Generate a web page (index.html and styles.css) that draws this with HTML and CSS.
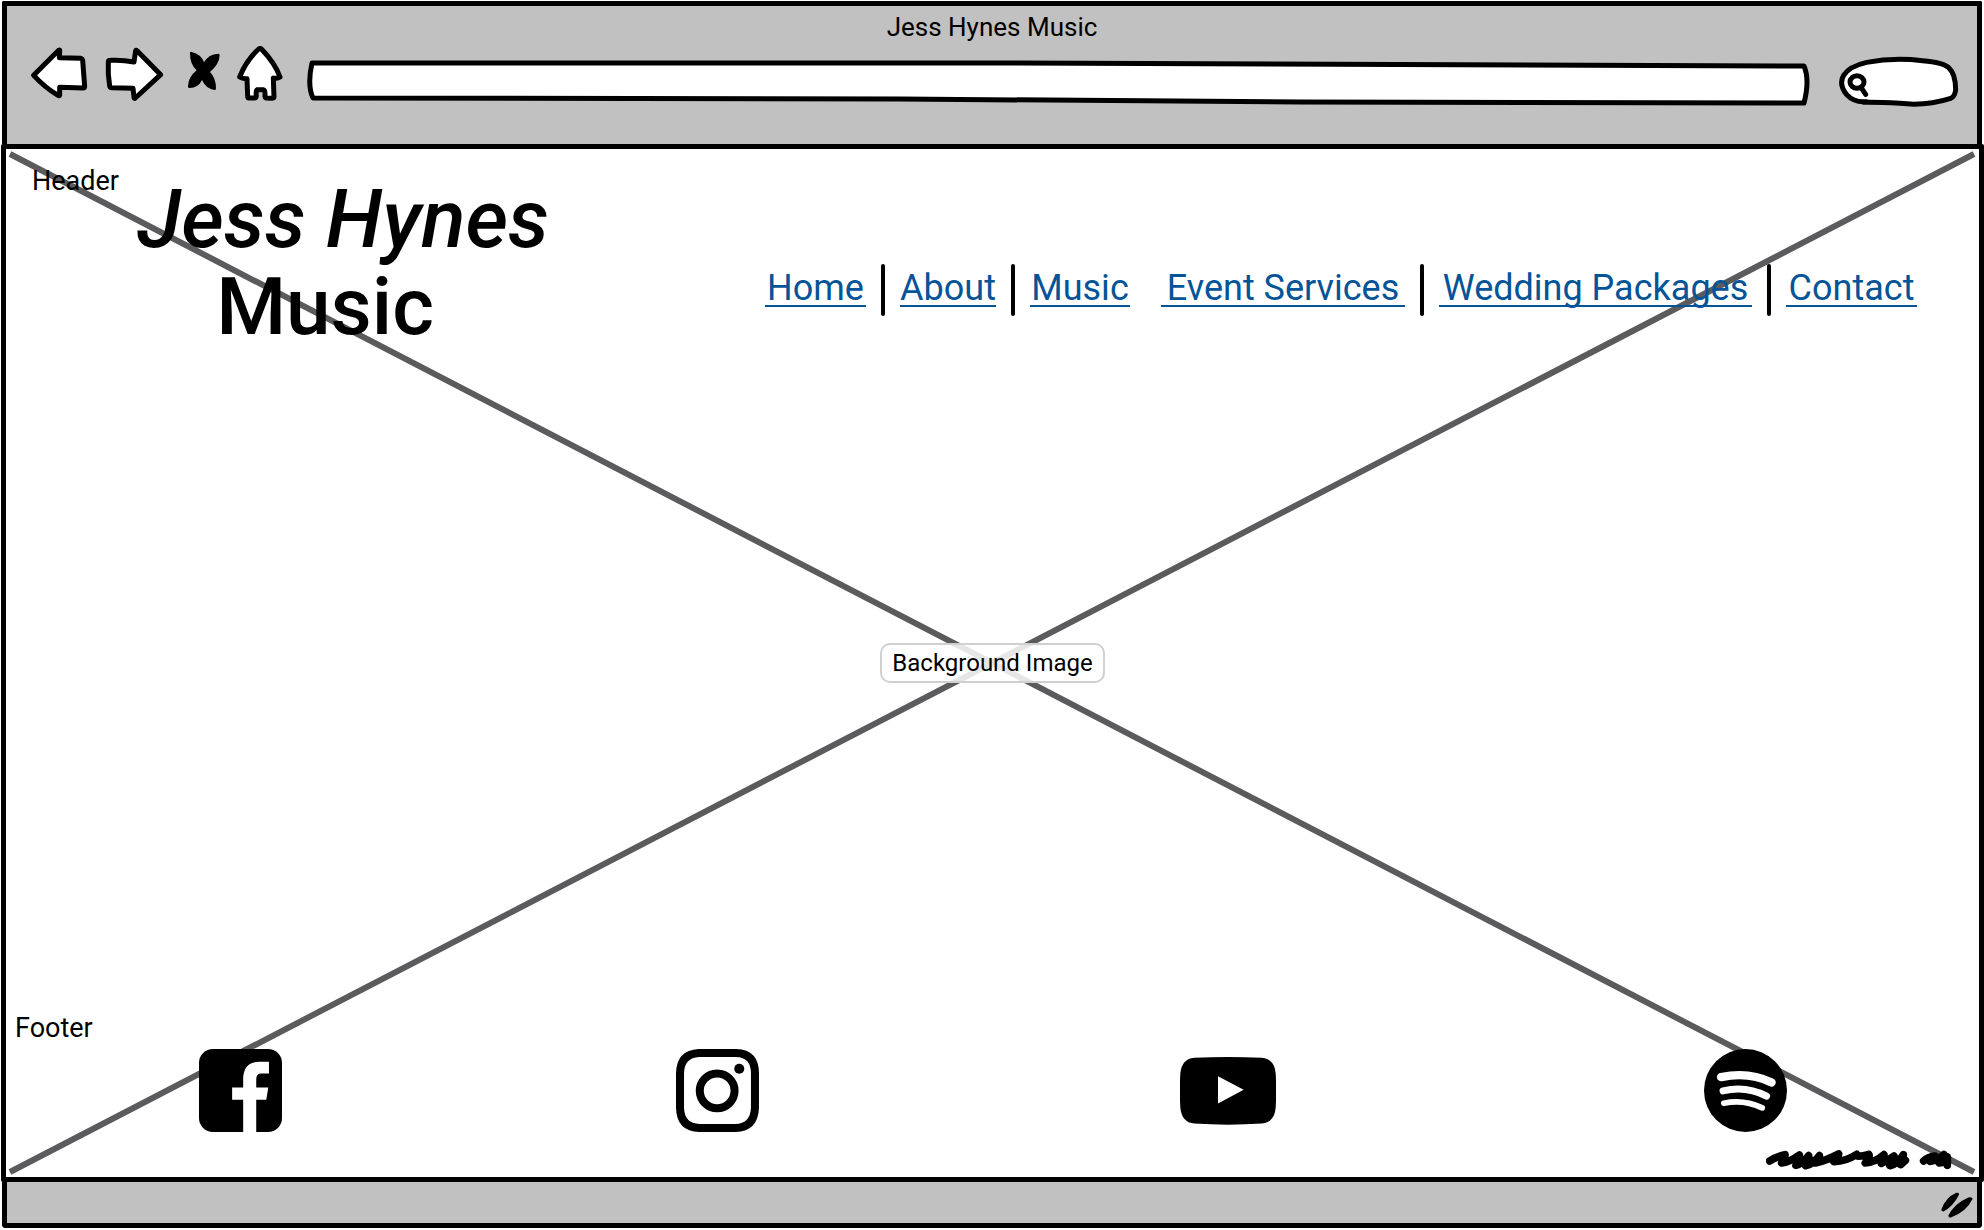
FILE: index.html
```html
<!DOCTYPE html>
<html lang="en">
<head>
<meta charset="utf-8">
<title>Jess Hynes Music</title>
<link rel="stylesheet" href="styles.css">
</head>
<body>
<div class="chrome">
  <p class="window-title">Jess Hynes Music</p>
  <div class="toolbar">
    <button class="tool" type="button" aria-label="Back">
      <svg width="57" height="62" viewBox="93 138 171 186"><path class="outline" d="M101 226L176 151Q180 148 179 154L178 173L243 175Q247 176 248 181L254 259Q254 264 249 264L179 262V286Q178 289 174 286Q134 262 101 226Z"/></svg>
    </button>
    <button class="tool" type="button" aria-label="Forward">
      <svg width="61" height="62" viewBox="312 138 183 186"><path class="outline" d="M325 186Q325 181 332 181Q366 179 402 186L407 152Q408 149 412 153L482 224L406 294Q402 297 402 292L399 265L335 263Q330 263 329 258Q323 222 325 186Z"/></svg>
    </button>
    <button class="tool" type="button" aria-label="Stop">
      <svg width="40" height="62" viewBox="543 138 120 186"><path d="M570 158Q570 154 575 156Q604 163 612 187Q626 162 655 161Q659 161 659 166Q658 193 630 216Q648 234 648 266Q648 270 643 270Q617 265 606 240Q594 265 567 264Q564 264 564 259Q565 231 590 211Q569 191 570 158Z"/></svg>
    </button>
    <button class="tool" type="button" aria-label="Home">
      <svg width="49" height="62" viewBox="711 138 147 186"><path class="outline" d="M776 147Q781 143 785 148Q825 190 840 231Q828 237 820 234L822 292Q821 295 816 295L798 294Q794 292 795 286Q796 270 790 269H772Q767 271 769 288Q768 295 761 294H746Q743 294 743 288L741 236Q728 237 719 231Q738 182 776 147Z"/></svg>
    </button>
    <div class="field field-address">
      <svg viewBox="302 46 1513 62" preserveAspectRatio="none"><path class="frame" d="M312 63L1000 63L1804 66Q1810 80 1804 103L1300 102L900 99L313 98Q307 85 312 63Z"/></svg>
      <input type="text" aria-label="Address">
    </div>
    <div class="field field-search">
      <svg viewBox="453 138 387 186"><path class="outline" d="M560 305Q523 309 500 284C466 241 491 203 560 187Q640 172 728 182Q793 188 806 203Q827 222 827 270Q824 291 812 295Q737 319 660 310Q590 306 550 307"/><ellipse class="line" cx="531" cy="246" rx="21" ry="19"/><path class="line" d="M543 262L557 283"/></svg>
      <input type="search" aria-label="Search">
    </div>
  </div>
</div>

<div class="page">
  <div class="backdrop">
    <svg viewBox="0 0 1973 1028" preserveAspectRatio="none"><path d="M4 5L1968 1023M1968 5L4 1023"/></svg>
    <span class="backdrop-label">Background Image</span>
  </div>

  <header class="header">
    <p class="section-label">Header</p>
    <h1 class="logo"><em>Jess Hynes</em><span>Music</span></h1>
    <nav class="nav">
      <a href="#home">Home</a><i></i>
      <a href="#about">About</a><i></i>
      <a href="#music">Music</a>
      <a class="apart" href="#events">Event Services</a><i></i>
      <a href="#weddings">Wedding Packages</a><i></i>
      <a href="#contact">Contact</a>
    </nav>
  </header>

  <footer class="footer">
    <p class="section-label">Footer</p>
    <div class="social">
      <a href="#facebook" aria-label="Facebook"><svg width="83" height="83" viewBox="0 0 248 248"><rect width="248" height="248" rx="42"/><path fill="#fff" d="M132 248V152H99V115H132V90Q132 38 180 38H209V73H186Q171 73 171 90V115H207L201 152H171V248Z"/></svg></a>
      <a href="#instagram" aria-label="Instagram"><svg width="83" height="83" viewBox="48 57 248 248"><g fill="none" stroke="#000"><path stroke-width="24" d="M116 69H228Q284 71 284 130V232Q282 291 226 293H118Q61 291 60 232V130Q61 72 116 69Z"/><circle cx="171" cy="182" r="52" stroke-width="24"/></g><circle cx="237" cy="116" r="15"/></svg></a>
      <a href="#youtube" aria-label="YouTube"><svg width="96" height="83" viewBox="60 57 288 248"><path d="M103 83Q204 78 305 83Q344 86 347 130Q350 182 347 232Q344 276 305 280Q204 287 103 280Q65 277 61 232Q58 182 61 130Q65 86 103 83Z"/><path fill="#fff" d="M174 138L251 179L174 220Z"/></svg></a>
      <a href="#spotify" aria-label="Spotify"><svg width="83" height="83" viewBox="72 57 248 248"><circle cx="196" cy="181" r="124"/><g fill="none" stroke="#fff" stroke-linecap="round"><path stroke-width="25" d="M123 141Q206 124 274 157"/><path stroke-width="21" d="M129 182Q198 166 259 198"/><path stroke-width="17" d="M131 219Q190 206 246 233"/></g></svg></a>
    </div>
    <svg class="scribble" width="186" height="20" viewBox="260 360 558 60"><g fill="none" stroke="#000" stroke-width="23" stroke-linecap="round" stroke-linejoin="round"><path d="M271 393Q290 381 317 374Q318 382 307 399Q330 397 360 375Q360 388 350 406Q368 402 388 377Q386 392 379 407Q400 404 420 377Q414 390 408 399Q440 392 478 372Q476 382 464 395Q500 394 532 373Q528 384 568 373Q574 380 558 399Q586 398 614 374Q610 390 606 400Q626 392 644 378Q638 396 632 407Q656 402 672 374L664 404L678 391M370 392H410M610 388H670"/><path d="M733 393Q746 380 766 378Q766 386 752 394Q774 392 794 374Q792 384 780 399Q796 398 804 380V406"/></g></svg>
  </footer>
</div>

<div class="statusbar">
  <svg width="32" height="27" viewBox="782 486 96 80"><path d="M828 488Q838 486 836 494Q818 530 789 544Q783 544 783 538Q796 502 828 488ZM864 502Q876 499 877 506Q858 546 810 563Q804 562 804 556Q822 520 864 502Z"/></svg>
</div>
</body>
</html>
```
FILE: styles.css
```css
* {
  box-sizing: border-box;
}

body {
  display: flex;
  flex-direction: column;
  min-height: 100vh;
  margin: 0;
  padding: 1px 0 2px 1px;
  background: #fff;
  color: #000;
  font-family: Roboto, "Liberation Sans", sans-serif;
  font-size: 26px;
  line-height: 32px;
}

p,
h1 {
  margin: 0;
}

svg {
  display: block;
}

.outline,
.line,
.frame {
  fill: #fff;
  stroke: #000;
  stroke-width: 15;
  stroke-linejoin: round;
  stroke-linecap: round;
}

.line {
  fill: none;
}

.frame {
  stroke-width: 5;
  vector-effect: non-scaling-stroke;
}

/* Browser window frame */
.chrome {
  height: 143px;
  margin: 0 2px 0 1px;
  padding: 5px 17px 0 24px;
  border: 5px solid #000;
  border-bottom: 0;
  border-radius: 2px 2px 0 0;
  background: #c1c1c1;
}

.window-title {
  padding-right: 7px;
  text-align: center;
}

.toolbar {
  display: flex;
  gap: 16px;
  padding-top: 3px;
}

.tool {
  padding: 0;
  border: 0;
  background: none;
}

.field {
  position: relative;
  height: 62px;
}

.field svg {
  position: absolute;
  inset: 0;
  width: 100%;
  height: 100%;
}

.field input {
  position: relative;
  width: 100%;
  height: 100%;
  padding: 0 16px;
  border: 0;
  outline: 0;
  background: none;
  font: inherit;
}

.field-address {
  flex: 1;
}

.field-search {
  width: 129px;
}

.field-search input {
  padding-left: 40px;
}

/* Page area */
.page {
  position: relative;
  display: flex;
  flex: 1;
  flex-direction: column;
  justify-content: space-between;
  border: 5px solid #000;
  border-radius: 2px;
}

.section-label {
  font-size: 27px;
}

.backdrop {
  position: absolute;
  inset: 0;
  display: grid;
  place-items: center;
}

.backdrop svg {
  position: absolute;
  width: 100%;
  height: 100%;
  fill: none;
  stroke: #5b5b5d;
  stroke-width: 6;
}

.backdrop-label {
  position: relative;
  padding: 2px 10px;
  border: 2px solid #d0d0d0;
  border-radius: 10px;
  background: rgba(255, 255, 255, 0.85);
  font-size: 24px;
}

.header {
  position: relative;
  display: flex;
  align-items: flex-start;
  padding: 16px 62px 0 26px;
}

.logo {
  display: flex;
  flex-direction: column;
  align-items: center;
  padding: 10px 0 0 18px;
  font-size: 82px;
  font-weight: 500;
  line-height: 88px;
}

.logo span {
  padding-right: 36px;
  font-size: 80px;
}

.nav {
  display: grid;
  grid-template-columns: 101px 4px 96px 4px 100px 260px 4px 313px 4px 131px;
  gap: 15px;
  margin-left: auto;
  padding-top: 99px;
}

.nav a {
  height: 43px;
  border-bottom: 2px solid #045497;
  color: #045497;
  font-size: 36px;
  line-height: 48px;
  text-align: center;
  text-decoration: none;
  white-space: nowrap;
}

.nav i {
  height: 52px;
  border-radius: 2px;
  background: #000;
}

.nav .apart {
  margin-left: 16px;
}

.footer {
  position: relative;
  padding: 0 27px 7px 9px;
}

.social {
  display: grid;
  grid-template-columns: 477fr 504fr 524fr 248fr;
  padding: 5px 0 18px 184px;
}

.social a {
  justify-self: start;
}

.scribble {
  margin-left: auto;
}

.statusbar {
  display: flex;
  justify-content: flex-end;
  height: 46px;
  margin: 0 2px 0 1px;
  padding: 10px 4px 0 0;
  border: 5px solid #000;
  border-top: 0;
  border-radius: 0 0 4px 4px;
  background: #c1c1c1;
}
```
